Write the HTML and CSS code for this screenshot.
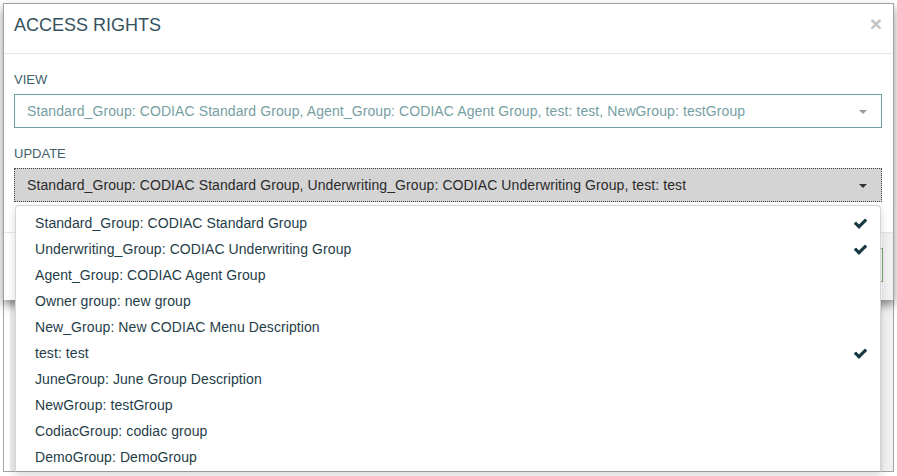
FILE: index.html
```html
<!DOCTYPE html>
<html>
<head>
<meta charset="utf-8">
<title>Access Rights</title>
<link rel="stylesheet" href="styles.css">
</head>
<body>
<div class="screen">
  <div class="modal">
    <div class="modal-header">
      <h4 class="modal-title">ACCESS RIGHTS</h4>
      <span class="close">&times;</span>
    </div>
    <div class="modal-body">
      <div class="form-group">
        <label class="label">VIEW</label>
        <div class="select select-view">
          <span class="select-text">Standard_Group: CODIAC Standard Group, Agent_Group: CODIAC Agent Group, test: test, NewGroup: testGroup</span>
          <span class="caret caret-light"></span>
        </div>
      </div>
      <div class="form-group">
        <label class="label">UPDATE</label>
        <div class="select-wrap">
          <div class="select select-update">
            <span class="select-text">Standard_Group: CODIAC Standard Group, Underwriting_Group: CODIAC Underwriting Group, test: test</span>
            <span class="caret caret-dark"></span>
          </div>
          <ul class="dropdown">
            <li class="item"><span>Standard_Group: CODIAC Standard Group</span><svg class="check" viewBox="0 0 1792 1792"><path d="M1671 566q0 40-28 68l-724 724-136 136q-28 28-68 28t-68-28l-136-136-362-362q-28-28-28-68t28-68l136-136q28-28 68-28t68 28l294 295 656-657q28-28 68-28t68 28l136 136q28 28 28 68z"/></svg></li>
            <li class="item"><span>Underwriting_Group: CODIAC Underwriting Group</span><svg class="check" viewBox="0 0 1792 1792"><path d="M1671 566q0 40-28 68l-724 724-136 136q-28 28-68 28t-68-28l-136-136-362-362q-28-28-28-68t28-68l136-136q28-28 68-28t68 28l294 295 656-657q28-28 68-28t68 28l136 136q28 28 28 68z"/></svg></li>
            <li class="item"><span>Agent_Group: CODIAC Agent Group</span></li>
            <li class="item"><span>Owner group: new group</span></li>
            <li class="item"><span>New_Group: New CODIAC Menu Description</span></li>
            <li class="item"><span>test: test</span><svg class="check" viewBox="0 0 1792 1792"><path d="M1671 566q0 40-28 68l-724 724-136 136q-28 28-68 28t-68-28l-136-136-362-362q-28-28-28-68t28-68l136-136q28-28 68-28t68 28l294 295 656-657q28-28 68-28t68 28l136 136q28 28 28 68z"/></svg></li>
            <li class="item"><span>JuneGroup: June Group Description</span></li>
            <li class="item"><span>NewGroup: testGroup</span></li>
            <li class="item"><span>CodiacGroup: codiac group</span></li>
            <li class="item"><span>DemoGroup: DemoGroup</span></li>
          </ul>
        </div>
      </div>
    </div>
    <div class="modal-footer">
      <button class="btn">Save</button>
    </div>
  </div>
  <div class="panel">
    <div class="strip strip-left"></div>
    <div class="strip strip-right"></div>
  </div>
</div>
</body>
</html>
```

FILE: styles.css
```css
html, body {
  margin: 0;
  padding: 0;
  background: #ffffff;
  font-family: "Liberation Sans", Arial, sans-serif;
}

.screen {
  width: 897px;
  height: 476px;
  padding: 3px 0 0 3px;
  box-sizing: border-box;
  overflow: hidden;
}

.modal {
  position: relative;
  z-index: 2;
  width: 891px;
  height: 297px;
  box-sizing: border-box;
  border: 1px solid #a3a3a3;
  border-bottom: none;
  background: #ffffff;
  box-shadow: 0 5px 9px rgba(0, 0, 0, 0.45);
  display: flex;
  flex-direction: column;
}

.modal-header {
  height: 50px;
  box-sizing: border-box;
  padding: 11px 11px 0 10px;
  border-bottom: 1px solid #e5e5e5;
  display: flex;
  justify-content: space-between;
  align-items: flex-start;
}

.modal-title {
  margin: 0;
  font-size: 18px;
  line-height: 20px;
  font-weight: normal;
  color: #34525e;
}

.close {
  font-size: 21px;
  font-weight: bold;
  line-height: 18px;
  color: #c4c4c4;
}

.modal-body {
  padding: 17px 11px 0 10px;
  height: 178px;
  box-sizing: border-box;
}

.form-group {
  margin-bottom: 17px;
}

.label {
  display: block;
  font-size: 13px;
  line-height: 18px;
  color: #3f5f6b;
  margin-bottom: 5px;
}

.select {
  height: 34px;
  box-sizing: border-box;
  display: flex;
  align-items: center;
  justify-content: space-between;
  padding: 0 14px 0 12px;
  font-size: 14px;
  letter-spacing: 0.09px;
}

.select-view {
  border: 1px solid #6e9e9e;
  color: #76a0a3;
  background: #ffffff;
}

.select-update {
  border: 1px dotted #444444;
  background: #d4d4d4;
  color: #2a2a2a;
}

.select-text {
  white-space: nowrap;
  overflow: hidden;
}

.caret {
  width: 0;
  height: 0;
  border-left: 4px solid transparent;
  border-right: 4px solid transparent;
  border-top: 4px solid #9a9a9a;
  margin-top: 1px;
}

.caret-dark {
  border-top-color: #333333;
}

.select-wrap {
  position: relative;
}

.dropdown {
  position: absolute;
  z-index: 5;
  top: 37px;
  left: 1px;
  right: 1px;
  margin: 0;
  padding: 4px 0 0 0;
  height: 267px;
  box-sizing: border-box;
  list-style: none;
  background: #ffffff;
  border: 1px solid #d6d6d6;
  border-radius: 4px 4px 0 0;
  border-bottom-color: #9a9a9a;
  box-shadow: 0 4px 10px rgba(0, 0, 0, 0.15);
  overflow: hidden;
}

.item {
  height: 26px;
  display: flex;
  align-items: center;
  justify-content: space-between;
  padding: 0 12px 0 19px;
  font-size: 14px;
  letter-spacing: 0.08px;
  color: #1f3d48;
}

.check {
  width: 15px;
  height: 15px;
  fill: #183846;
}

.modal-footer {
  flex: 1;
  border-top: 1px solid #e5e5e5;
  padding: 15px 10px 0 10px;
  display: flex;
  justify-content: flex-end;
  align-items: flex-start;
  background: linear-gradient(to left, #f1f1f1 11px, #ffffff 11px);
}

.btn {
  height: 34px;
  padding: 0 20px;
  border: 1px solid #78a46c;
  background: #ffffff;
  color: #3f6a36;
  font-family: "Liberation Sans", Arial, sans-serif;
  font-size: 13px;
  border-radius: 0;
}

.panel {
  position: relative;
  z-index: 1;
  width: 891px;
  height: 172px;
  box-sizing: border-box;
  border: 1px solid #a3a3a3;
  border-top: none;
  display: flex;
  justify-content: space-between;
}

.strip-left {
  width: 5px;
  margin-left: 6px;
  background: #ececec;
}

.strip-right {
  width: 11px;
  background: #f1f1f1;
  border-left: 1px solid #e3e3e3;
}
```
